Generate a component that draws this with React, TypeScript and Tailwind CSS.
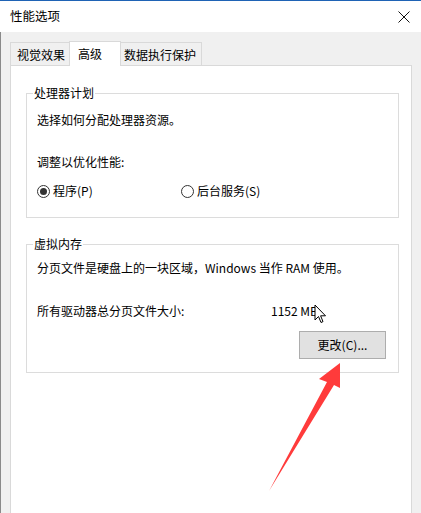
import React from 'react'

const font = "font-['Noto_Sans_CJK_SC','Noto_Sans',sans-serif]"

function Radio({ checked, label }: { checked?: boolean; label: string }) {
  return (
    <div className="flex items-center gap-[3px]">
      <span className="flex h-[13px] w-[13px] items-center justify-center rounded-full border border-[#333] bg-white">
        {checked && <span className="h-[7px] w-[7px] rounded-full bg-[#333]" />}
      </span>
      <span>{label}</span>
    </div>
  )
}

function Group({ title, children, className }: { title: string; children: React.ReactNode; className?: string }) {
  return (
    <fieldset className={`ml-[15px] w-[373px] border border-[#dcdcdc] ${className ?? ''}`}>
      <legend className="ml-[6px] px-[1px] leading-[16px]">{title}</legend>
      <div className="pl-[10px]">{children}</div>
    </fieldset>
  )
}

export default function App() {
  return (
    <div className={`relative flex h-[513px] w-[421px] flex-col overflow-hidden bg-[#f0f0f0] text-[12px] text-black ${font}`}>
      {/* 标题栏 */}
      <div className="flex h-[32px] shrink-0 items-center justify-between border-t border-[#1f63b5] bg-white pl-[10px] pr-[10px]">
        <span className="text-[12.5px]">性能选项</span>
        <svg width="12" height="12" viewBox="0 0 12 12" className="mr-[1px]">
          <path d="M0.5 0.5 L11.5 11.5 M11.5 0.5 L0.5 11.5" stroke="#111" strokeWidth="1" />
        </svg>
      </div>

      <div className="flex flex-1 flex-col border-l border-[#8a8a8a]">
        {/* 选项卡 */}
        <div className="flex items-end pl-[9px] pt-[9px]">
          <div className="h-[23px] w-[59px] border-l border-t border-[#d9d9d9] bg-[#f0f0f0] pl-[6px] pt-[4px] leading-[16px]">视觉效果</div>
          <div className="relative z-10 -mb-[1px] h-[25px] w-[52px] border-x border-t border-[#d9d9d9] bg-white pl-[8px] pt-[4px] leading-[16px]">高级</div>
          <div className="h-[23px] w-[81px] border-r border-t border-[#d9d9d9] bg-[#f0f0f0] pl-[3px] pt-[4px] leading-[16px]">数据执行保护</div>
        </div>

        {/* 选项卡面板 */}
        <div className="ml-[9px] h-[460px] w-[402px] border border-[#d9d9d9] bg-white pt-[19px]">
          <Group title="处理器计划" className="pb-[18px]">
            <p className="mt-[11px] leading-[16px]">选择如何分配处理器资源。</p>
            <p className="mt-[26px] leading-[16px]">调整以优化性能:</p>
            <div className="mt-[13px] flex leading-[16px]">
              <div className="w-[144px]">
                <Radio checked label="程序(P)" />
              </div>
              <Radio label="后台服务(S)" />
            </div>
          </Group>

          <Group title="虚拟内存" className="mt-[18px] pb-[13px]">
            <p className="mt-[8px] leading-[16px]">分页文件是硬盘上的一块区域，Windows 当作 RAM 使用。</p>
            <div className="mt-[27px] flex leading-[16px]">
              <span className="w-[234px]">所有驱动器总分页文件大小:</span>
              <span>1152 MB</span>
            </div>
            <div className="mt-[12px] flex justify-end pr-[12px]">
              <button className="h-[28px] w-[87px] border border-[#adadad] bg-[#e1e1e1] leading-[16px]">更改(C)...</button>
            </div>
          </Group>
        </div>
      </div>

      {/* 鼠标指针 */}
      <svg className="pointer-events-none absolute left-[314px] top-[304px]" width="13" height="21" viewBox="0 0 13 21">
        <path d="M1 1 L1 16 L4.5 12.5 L7 18.5 L9 17.6 L6.6 11.8 L11.5 11.8 Z" fill="#fff" stroke="#000" strokeWidth="1" strokeLinejoin="round" />
      </svg>

      {/* 红色箭头 */}
      <svg className="pointer-events-none absolute left-0 top-0" width="421" height="513" viewBox="0 0 421 513">
        <polygon points="269,491 327,382 319,379 340,363 340,388 334,385" fill="#ff3b3b" />
      </svg>
    </div>
  )
}
